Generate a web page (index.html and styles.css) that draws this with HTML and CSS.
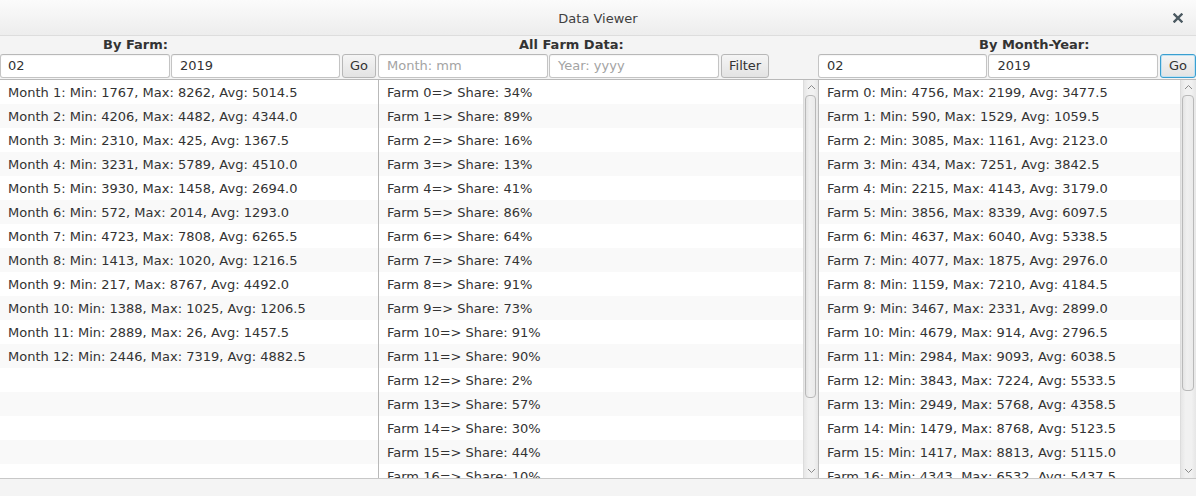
FILE: index.html
```html
<!DOCTYPE html>
<html>
<head>
<meta charset="utf-8">
<title>Data Viewer</title>
<link rel="stylesheet" href="styles.css">
</head>
<body>
<div class="window">
  <div class="titlebar">
    <span class="title">Data Viewer</span>
    <svg class="close" width="10" height="10" viewBox="0 0 10 10"><path d="M1.5 1.5 L8.5 8.5 M8.5 1.5 L1.5 8.5" stroke="#4b5961" stroke-width="2.4" stroke-linecap="square"/></svg>
  </div>
  <div class="main">
    <section class="col col-left">
      <div class="header h-left">By Farm:</div>
      <div class="controls">
        <div class="field">02</div>
        <div class="field f2">2019</div>
        <div class="btn">Go</div>
      </div>
      <div class="list list-left">
        <div class="rows">
          <div class="row">Month 1: Min: 1767, Max: 8262, Avg: 5014.5</div>
          <div class="row">Month 2: Min: 4206, Max: 4482, Avg: 4344.0</div>
          <div class="row">Month 3: Min: 2310, Max: 425, Avg: 1367.5</div>
          <div class="row">Month 4: Min: 3231, Max: 5789, Avg: 4510.0</div>
          <div class="row">Month 5: Min: 3930, Max: 1458, Avg: 2694.0</div>
          <div class="row">Month 6: Min: 572, Max: 2014, Avg: 1293.0</div>
          <div class="row">Month 7: Min: 4723, Max: 7808, Avg: 6265.5</div>
          <div class="row">Month 8: Min: 1413, Max: 1020, Avg: 1216.5</div>
          <div class="row">Month 9: Min: 217, Max: 8767, Avg: 4492.0</div>
          <div class="row">Month 10: Min: 1388, Max: 1025, Avg: 1206.5</div>
          <div class="row">Month 11: Min: 2889, Max: 26, Avg: 1457.5</div>
          <div class="row">Month 12: Min: 2446, Max: 7319, Avg: 4882.5</div>
          <div class="row"></div>
          <div class="row"></div>
          <div class="row"></div>
          <div class="row"></div>
          <div class="row"></div>
        </div>
      </div>
    </section>
    <section class="col col-center">
      <div class="header h-center">All Farm Data:</div>
      <div class="controls">
        <div class="field prompt">Month: mm</div>
        <div class="field prompt">Year: yyyy</div>
        <div class="btn btn-filter">Filter</div>
      </div>
      <div class="list list-center">
        <div class="rows">
          <div class="row">Farm 0=&gt; Share: 34%</div>
          <div class="row">Farm 1=&gt; Share: 89%</div>
          <div class="row">Farm 2=&gt; Share: 16%</div>
          <div class="row">Farm 3=&gt; Share: 13%</div>
          <div class="row">Farm 4=&gt; Share: 41%</div>
          <div class="row">Farm 5=&gt; Share: 86%</div>
          <div class="row">Farm 6=&gt; Share: 64%</div>
          <div class="row">Farm 7=&gt; Share: 74%</div>
          <div class="row">Farm 8=&gt; Share: 91%</div>
          <div class="row">Farm 9=&gt; Share: 73%</div>
          <div class="row">Farm 10=&gt; Share: 91%</div>
          <div class="row">Farm 11=&gt; Share: 90%</div>
          <div class="row">Farm 12=&gt; Share: 2%</div>
          <div class="row">Farm 13=&gt; Share: 57%</div>
          <div class="row">Farm 14=&gt; Share: 30%</div>
          <div class="row">Farm 15=&gt; Share: 44%</div>
          <div class="row">Farm 16=&gt; Share: 10%</div>
        </div>
        <div class="scrollbar">
          <svg class="arrow" width="15" height="15" viewBox="0 0 15 15"><path d="M4 9 L7.5 5.5 L11 9" fill="none" stroke="#8a8a8a" stroke-width="1"/></svg>
          <div class="track"><div class="thumb thumb-center"></div></div>
          <svg class="arrow" width="15" height="15" viewBox="0 0 15 15"><path d="M4 6 L7.5 9.5 L11 6" fill="none" stroke="#8a8a8a" stroke-width="1"/></svg>
        </div>
      </div>
    </section>
    <section class="col col-right">
      <div class="header h-right">By Month-Year:</div>
      <div class="controls">
        <div class="field">02</div>
        <div class="field">2019</div>
        <div class="btn btn-focus">Go</div>
      </div>
      <div class="list list-right">
        <div class="rows">
          <div class="row">Farm 0: Min: 4756, Max: 2199, Avg: 3477.5</div>
          <div class="row">Farm 1: Min: 590, Max: 1529, Avg: 1059.5</div>
          <div class="row">Farm 2: Min: 3085, Max: 1161, Avg: 2123.0</div>
          <div class="row">Farm 3: Min: 434, Max: 7251, Avg: 3842.5</div>
          <div class="row">Farm 4: Min: 2215, Max: 4143, Avg: 3179.0</div>
          <div class="row">Farm 5: Min: 3856, Max: 8339, Avg: 6097.5</div>
          <div class="row">Farm 6: Min: 4637, Max: 6040, Avg: 5338.5</div>
          <div class="row">Farm 7: Min: 4077, Max: 1875, Avg: 2976.0</div>
          <div class="row">Farm 8: Min: 1159, Max: 7210, Avg: 4184.5</div>
          <div class="row">Farm 9: Min: 3467, Max: 2331, Avg: 2899.0</div>
          <div class="row">Farm 10: Min: 4679, Max: 914, Avg: 2796.5</div>
          <div class="row">Farm 11: Min: 2984, Max: 9093, Avg: 6038.5</div>
          <div class="row">Farm 12: Min: 3843, Max: 7224, Avg: 5533.5</div>
          <div class="row">Farm 13: Min: 2949, Max: 5768, Avg: 4358.5</div>
          <div class="row">Farm 14: Min: 1479, Max: 8768, Avg: 5123.5</div>
          <div class="row">Farm 15: Min: 1417, Max: 8813, Avg: 5115.0</div>
          <div class="row">Farm 16: Min: 4343, Max: 6532, Avg: 5437.5</div>
        </div>
        <div class="scrollbar">
          <svg class="arrow" width="15" height="15" viewBox="0 0 15 15"><path d="M4 9 L7.5 5.5 L11 9" fill="none" stroke="#8a8a8a" stroke-width="1"/></svg>
          <div class="track"><div class="thumb thumb-right"></div></div>
          <svg class="arrow" width="15" height="15" viewBox="0 0 15 15"><path d="M4 6 L7.5 9.5 L11 6" fill="none" stroke="#8a8a8a" stroke-width="1"/></svg>
        </div>
      </div>
    </section>
  </div>
  <div class="footer"></div>
</div>
</body>
</html>
```

FILE: styles.css
```css
* { box-sizing: border-box; }
html, body {
  margin: 0;
  padding: 0;
  width: 1196px;
  height: 496px;
  overflow: hidden;
  background: #f4f4f4;
  font-family: "DejaVu Sans", "Noto Sans", sans-serif;
  font-size: 13px;
  color: #333333;
}
.window {
  display: flex;
  flex-direction: column;
  width: 1196px;
  height: 496px;
}
.titlebar {
  height: 36px;
  flex: none;
  position: relative;
  display: flex;
  align-items: center;
  justify-content: center;
  background: linear-gradient(#fbfbfb, #ededed);
  border-bottom: 1px solid #dddddd;
}
.title {
  color: #3f3f3f;
  font-size: 13px;
  padding-top: 1px;
}
.close {
  position: absolute;
  right: 13px;
  top: 13px;
}
.main {
  flex: none;
  height: 442px;
  display: grid;
  grid-template-columns: 378px 440px 378px;
  grid-template-rows: minmax(0, 1fr);
  overflow: hidden;
}
.col {
  display: flex;
  flex-direction: column;
  min-width: 0;
  min-height: 0;
}
.header {
  height: 18px;
  flex: none;
  line-height: 18px;
  font-weight: bold;
  color: #333333;
  white-space: nowrap;
}
.h-left { padding-left: 103px; }
.h-center { padding-left: 141px; }
.h-right { padding-left: 161px; }
.controls {
  height: 25px;
  flex: none;
  display: flex;
  gap: 1px;
  padding-bottom: 1px;
}
.field {
  width: 170px;
  height: 24px;
  line-height: 22px;
  padding-left: 8px;
  background: #ffffff;
  border: 1px solid #c4c4c4;
  border-top-color: #b8b8b8;
  border-radius: 3px;
  box-shadow: inset 0 1px 1px rgba(0,0,0,0.04);
  white-space: nowrap;
  overflow: hidden;
}
.col-left .field:first-child { padding-left: 7px; }
.field.f2 { width: 169px; }
.prompt { color: #a3a3a3; }
.btn {
  height: 24px;
  line-height: 22px;
  padding: 0 7px;
  margin-left: 1px;
  background: linear-gradient(#f5f5f5, #e3e3e3);
  border: 1px solid #b7b7b7;
  border-radius: 3px;
  color: #333333;
  white-space: nowrap;
}
.btn-focus {
  border-color: #3a9fd0;
  box-shadow: inset 0 0 0 1px #bfe1f2;
  padding: 0 8px;
}
.list {
  flex: 1;
  display: flex;
  background: #ffffff;
  border-top: 1px solid #b9b9b9;
  overflow: hidden;
  min-height: 0;
}
.list-center, .list-right { border-left: 1px solid #b9b9b9; }
.rows {
  flex: 1;
  min-width: 0;
  overflow: hidden;
}
.row {
  height: 24px;
  line-height: 22px;
  padding: 2px 0 0 8px;
  white-space: nowrap;
  background: #ffffff;
}
.row:nth-child(even) { background: #f9f9f9; }
.scrollbar {
  width: 15px;
  flex: none;
  display: flex;
  flex-direction: column;
  background: linear-gradient(90deg, #e6e6e6, #f1f1f1 30%, #f1f1f1 70%, #e6e6e6);
  border-left: 1px solid #dcdcdc;
}
.list-right .scrollbar { width: 16px; }
.arrow {
  display: block;
  flex: none;
  width: 15px;
  height: 15px;
}
.track {
  flex: 1;
  min-height: 0;
  padding: 0 1px;
}
.thumb {
  background: linear-gradient(90deg, #e4e4e4, #f0f0f0 40%, #eaeaea);
  border: 1px solid #b9b9b9;
  border-radius: 4px;
  margin: 0 1px 0 0;
}
.thumb-center { height: 303px; }
.thumb-right { height: 296px; }
.footer {
  flex: 1;
  border-top: 1px solid #c8c8c8;
  background: #f4f4f4;
}
```
